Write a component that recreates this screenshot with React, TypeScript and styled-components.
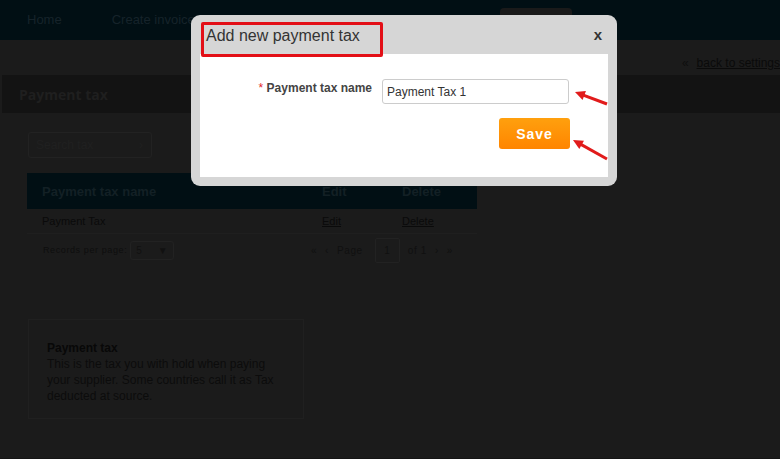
import React from "react";
import styled, { createGlobalStyle } from "styled-components";

const GlobalStyle = createGlobalStyle`
  html, body { margin: 0; padding: 0; }
  body {
    width: 780px;
    height: 459px;
    overflow: hidden;
    background: #1b1b1b;
    font-family: "Liberation Sans", Arial, sans-serif;
  }
`;

const Page = styled.div`
  position: relative;
  width: 780px;
  height: 459px;
  background: #1b1b1b;
  border-bottom: 1px solid #151515;
  box-sizing: border-box;
`;

const NavBar = styled.div`
  height: 40px;
  background: #010f14;
  display: flex;
  align-items: center;
  padding-left: 27px;
  box-sizing: border-box;
`;

const NavItem = styled.div`
  font-size: 13px;
  color: #16232a;
  margin-right: 50px;
  padding-bottom: 2px;
`;

const NavTab = styled.div`
  align-self: flex-end;
  margin-left: 255px;
  width: 72px;
  height: 32px;
  background: #1a1a1a;
  border-radius: 4px 4px 0 0;
`;

const SubBar = styled.div`
  height: 35px;
  display: flex;
  justify-content: flex-end;
  align-items: flex-end;
  padding-bottom: 5px;
  box-sizing: border-box;
`;

const BackLink = styled.span`
  font-size: 12px;
  color: #0a0a0a;
  text-decoration: underline;
  white-space: nowrap;
  &::before {
    content: "«";
    text-decoration: none;
    display: inline-block;
    margin-right: 8px;
    color: #0e0e0e;
  }
`;

const HeaderBand = styled.div`
  height: 38px;
  margin-left: 2px;
  background: #131313;
  display: flex;
  align-items: center;
  padding-left: 17px;
`;

const PageTitle = styled.h1`
  margin: 0;
  font-family: "Open Sans", sans-serif;
  font-size: 14px;
  font-weight: 700;
  color: #1f1f1f;
`;

const Content = styled.div`
  padding: 19px 0 0 27px;
`;

const SearchBox = styled.div`
  width: 124px;
  height: 26px;
  margin-left: 1px;
  border: 1px solid #222;
  border-radius: 3px;
  box-sizing: border-box;
  display: flex;
  align-items: center;
  justify-content: space-between;
  padding: 0 8px 0 7px;
  font-size: 12px;
  color: #202020;
`;

const Table = styled.div`
  width: 450px;
  margin-top: 15px;
`;

const Row = styled.div<{ $head?: boolean }>`
  display: grid;
  grid-template-columns: 280px 80px 1fr;
  align-items: center;
  height: ${(p) => (p.$head ? 36 : 24)}px;
  background: ${(p) => (p.$head ? "#010f14" : "transparent")};
  border-bottom: ${(p) => (p.$head ? "none" : "1px solid #1f1f1f")};
  padding-left: 15px;
  font-size: ${(p) => (p.$head ? 13 : 11)}px;
  font-weight: ${(p) => (p.$head ? 700 : 400)};
  color: ${(p) => (p.$head ? "#132025" : "#0a0a0a")};
`;

const CellLink = styled.span`
  text-decoration: underline;
`;

const Pager = styled.div`
  display: flex;
  align-items: center;
  justify-content: space-between;
  height: 32px;
  padding-left: 16px;
  padding-right: 24px;
  font-size: 9px;
  letter-spacing: 0.6px;
  color: #0e0e0e;
`;

const Records = styled.div`
  display: flex;
  align-items: center;
  gap: 3px;
`;

const Select = styled.div`
  width: 44px;
  height: 19px;
  border: 1px solid #222;
  border-radius: 3px;
  box-sizing: border-box;
  display: flex;
  justify-content: space-between;
  align-items: center;
  padding: 0 5px;
  font-size: 10px;
  color: #111;
`;

const PageNav = styled.div`
  display: flex;
  align-items: center;
  gap: 8px;
  color: #101010;
  font-size: 10px;
`;

const PageBox = styled.span`
  width: 23px;
  height: 23px;
  border: 1px solid #222;
  border-radius: 2px;
  display: flex;
  align-items: center;
  justify-content: center;
  margin-left: 4px;
`;

const InfoBox = styled.div`
  width: 276px;
  height: 100px;
  margin-top: 53px;
  margin-left: 1px;
  border: 1px solid #202020;
  box-sizing: border-box;
  padding: 20px 18px 0;
  font-size: 12px;
  line-height: 16px;
  color: #0c0c0c;
`;

const InfoTitle = styled.div`
  font-weight: 700;
  font-size: 12px;
  color: #080808;
`;

const Modal = styled.div`
  position: absolute;
  left: 191px;
  top: 15px;
  width: 426px;
  height: 171px;
  background: #d6d6d6;
  border-radius: 9px;
  box-sizing: border-box;
  padding: 0 9px 9px;
  display: flex;
  flex-direction: column;
`;

const ModalHead = styled.div`
  height: 39px;
  display: flex;
  align-items: flex-start;
  justify-content: space-between;
`;

const TitleMark = styled.div`
  margin-top: 7px;
  margin-left: 1px;
  width: 182px;
  height: 35px;
  border: 3px solid #e30f17;
  border-radius: 2px;
  box-sizing: border-box;
  padding: 2px 0 0 2px;
  font-size: 16px;
  color: #333;
  white-space: nowrap;
  position: relative;
  z-index: 1;
`;

const Close = styled.span`
  margin-top: 11px;
  margin-right: 6px;
  font-size: 15px;
  font-weight: 700;
  color: #333;
`;

const ModalBody = styled.div`
  flex: 1;
  background: #fff;
  display: flex;
  flex-direction: column;
  align-items: flex-start;
  padding: 25px 0 0 52px;
`;

const FieldRow = styled.div`
  display: flex;
  align-items: flex-start;
  gap: 10px;
`;

const Label = styled.label`
  width: 120px;
  text-align: right;
  white-space: nowrap;
  font-size: 12px;
  font-weight: 700;
  color: #444;
  padding-top: 2px;
  &::before {
    content: "* ";
    color: #e3262c;
    font-weight: 400;
  }
`;

const Input = styled.div`
  width: 187px;
  height: 25px;
  border: 1px solid #ccc;
  border-radius: 3px;
  box-sizing: border-box;
  padding: 5px 4px;
  font-size: 12px;
  color: #333;
`;

const SaveButton = styled.button`
  margin: 14px 0 0 247px;
  width: 71px;
  height: 31px;
  border: none;
  border-radius: 3px;
  background: linear-gradient(#ffa00e, #ff8500);
  color: #fff;
  font-family: "Liberation Sans", Arial, sans-serif;
  font-weight: 700;
  font-size: 14px;
  letter-spacing: 1px;
`;

const Arrows = styled.svg`
  position: absolute;
  left: 565px;
  top: 80px;
`;

const Arrow = ({ x1, y1, x2, y2 }: { x1: number; y1: number; x2: number; y2: number }) => {
  const a = Math.atan2(y2 - y1, x2 - x1);
  const l = 11;
  const w = 0.45;
  const p1 = `${x2 - l * Math.cos(a - w)},${y2 - l * Math.sin(a - w)}`;
  const p2 = `${x2 - l * Math.cos(a + w)},${y2 - l * Math.sin(a + w)}`;
  return (
    <g>
      <line x1={x1} y1={y1} x2={x2 - 6 * Math.cos(a)} y2={y2 - 6 * Math.sin(a)} stroke="#e11b1b" strokeWidth={3} />
      <polygon points={`${x2},${y2} ${p1} ${p2}`} fill="#e11b1b" />
    </g>
  );
};

export default function App() {
  return (
    <>
      <GlobalStyle />
      <Page>
        <NavBar>
          <NavItem>Home</NavItem>
          <NavItem>Create invoice</NavItem>
          <NavTab />
        </NavBar>
        <SubBar>
          <BackLink>back to settings</BackLink>
        </SubBar>
        <HeaderBand>
          <PageTitle>Payment tax</PageTitle>
        </HeaderBand>
        <Content>
          <SearchBox>
            <span>Search tax</span>
            <span>›</span>
          </SearchBox>
          <Table>
            <Row $head>
              <span>Payment tax name</span>
              <span>Edit</span>
              <span>Delete</span>
            </Row>
            <Row>
              <span>Payment Tax</span>
              <CellLink>Edit</CellLink>
              <CellLink>Delete</CellLink>
            </Row>
            <Pager>
              <Records>
                Records per page:
                <Select>
                  <span>5</span>
                  <span>▼</span>
                </Select>
              </Records>
              <PageNav>
                <span>«</span>
                <span>‹</span>
                <span>Page</span>
                <PageBox>1</PageBox>
                <span>of 1</span>
                <span>›</span>
                <span>»</span>
              </PageNav>
            </Pager>
          </Table>
          <InfoBox>
            <InfoTitle>Payment tax</InfoTitle>
            This is the tax you with hold when paying your supplier. Some countries call it as Tax deducted at source.
          </InfoBox>
        </Content>

        <Modal>
          <ModalHead>
            <TitleMark>Add new payment tax</TitleMark>
            <Close>x</Close>
          </ModalHead>
          <ModalBody>
            <FieldRow>
              <Label>Payment tax name</Label>
              <Input>Payment Tax 1</Input>
            </FieldRow>
            <SaveButton>Save</SaveButton>
          </ModalBody>
        </Modal>
        <Arrows width="50" height="90">
          <Arrow x1={42} y1={24} x2={10} y2={12} />
          <Arrow x1={42} y1={79} x2={8} y2={60} />
        </Arrows>
      </Page>
    </>
  );
}
